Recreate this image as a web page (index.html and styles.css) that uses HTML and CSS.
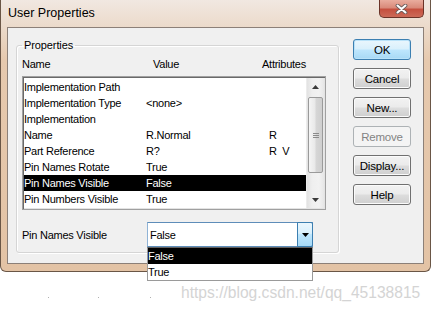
FILE: index.html
```html
<!DOCTYPE html>
<html>
<head>
  <title>User Properties</title>
  <link rel="stylesheet" href="styles.css">
</head>
<body>
  <div class="window">
    <div class="titlebar">
      <span class="title">User Properties</span>
      <div class="close-btn">
        <svg width="13" height="10" viewBox="0 0 13 10">
          <path d="M2.5 1.5 L10.5 8.5 M10.5 1.5 L2.5 8.5" stroke="#6a5a58" stroke-width="3.8" stroke-linecap="round"/>
          <path d="M2.5 1.5 L10.5 8.5 M10.5 1.5 L2.5 8.5" stroke="#ffffff" stroke-width="2.1" stroke-linecap="round"/>
        </svg>
      </div>
    </div>

    <div class="client">
      <fieldset class="group">
        <legend>Properties</legend>

        <div class="col-head">
          <span class="col-name">Name</span>
          <span class="col-value">Value</span>
          <span>Attributes</span>
        </div>

        <div class="listbox">
          <div class="rows">
            <div class="row"><span class="c-name">Implementation Path</span><span class="c-value"></span><span></span></div>
            <div class="row"><span class="c-name">Implementation Type</span><span class="c-value">&lt;none&gt;</span><span></span></div>
            <div class="row"><span class="c-name">Implementation</span><span class="c-value"></span><span></span></div>
            <div class="row"><span class="c-name">Name</span><span class="c-value">R.Normal</span><span>R</span></div>
            <div class="row"><span class="c-name">Part Reference</span><span class="c-value">R?</span><span>R&nbsp;&nbsp;V</span></div>
            <div class="row"><span class="c-name">Pin Names Rotate</span><span class="c-value">True</span><span></span></div>
            <div class="row selected"><span class="c-name">Pin Names Visible</span><span class="c-value">False</span><span></span></div>
            <div class="row"><span class="c-name">Pin Numbers Visible</span><span class="c-value">True</span><span></span></div>
          </div>
          <div class="scrollbar">
            <div class="sb-arrow">
              <svg width="7" height="4" viewBox="0 0 7 4"><path d="M0 4 L3.5 0 L7 4 Z" fill="#3a3a3a"/></svg>
            </div>
            <div class="sb-track">
              <div class="sb-thumb"><span class="grip"></span></div>
            </div>
            <div class="sb-arrow">
              <svg width="7" height="4" viewBox="0 0 7 4"><path d="M0 0 L7 0 L3.5 4 Z" fill="#3a3a3a"/></svg>
            </div>
          </div>
        </div>

        <div class="field">
          <span class="field-label">Pin Names Visible</span>
          <div class="combo">
            <span class="combo-value">False</span>
            <span class="combo-btn">
              <svg width="7" height="4" viewBox="0 0 7 4"><path d="M0 0 L7 0 L3.5 4 Z" fill="#000"/></svg>
            </span>
            <div class="dropdown">
              <div class="option selected">False</div>
              <div class="option">True</div>
            </div>
          </div>
        </div>
      </fieldset>

      <div class="buttons">
        <button class="btn default">OK</button>
        <button class="btn">Cancel</button>
        <button class="btn">New...</button>
        <button class="btn" disabled>Remove</button>
        <button class="btn">Display...</button>
        <button class="btn">Help</button>
      </div>
    </div>
  </div>

  <div class="watermark">
    <span class="dot"></span>
    <span class="dot"></span>
    <span class="dot"></span>
    <span class="wm-text">https://blog.csdn.net/qq_45138815</span>
  </div>
</body>
</html>
```

FILE: styles.css
```css
body {
  margin: 0;
  padding: 0;
  background-color: #ffffff;
  font-family: "Liberation Sans", Arial, sans-serif;
  font-size: 11px;
  color: #000;
}

.window {
  width: 431px;
  height: 272px;
  box-sizing: border-box;
  border: 1px solid #6a5646;
  border-top: none;
  border-radius: 0 0 6px 6px;
  background: linear-gradient(to bottom, #f1e8e1 0px, #ecdccd 24px, #e6c9ae 60px, #e3c3a5 100%);
  display: flex;
  flex-direction: column;
}

.titlebar {
  height: 27px;
  display: flex;
  justify-content: space-between;
  align-items: flex-start;
}

.title {
  font-size: 12.5px;
  padding: 6px 0 0 7px;
  color: #000;
}

.close-btn {
  width: 45px;
  height: 18px;
  margin-right: 6px;
  box-sizing: border-box;
  border: 1px solid #6b3328;
  border-top: none;
  border-radius: 0 0 5px 5px;
  background: linear-gradient(to bottom, #e9ad9e 0%, #d98a7a 45%, #c5503f 55%, #cc6a58 100%);
  display: flex;
  align-items: center;
  justify-content: center;
}

.client {
  width: 417px;
  height: 237px;
  margin: 0 6px 7px 6px;
  box-sizing: border-box;
  border: 1px solid #8c8078;
  background-color: #f0f0f0;
  display: flex;
  align-items: flex-start;
  padding: 11px 0 0 8px;
}

.group {
  margin: 0;
  width: 323px;
  height: 214px;
  box-sizing: border-box;
  border: 1px solid #d5d5d5;
  border-radius: 3px;
  padding: 0 11px 4px 5px;
  box-shadow: inset 1px 1px 0 #ffffff, 1px 1px 0 #ffffff;
}

.group legend {
  padding: 0 2px;
  line-height: 13px;
  font-size: 11px;
  letter-spacing: -0.1px;
}

.col-head {
  display: flex;
  margin-top: 5px;
  line-height: 14px;
  letter-spacing: -0.25px;
}

.col-name {
  width: 131px;
}

.col-value {
  width: 109px;
}

.listbox {
  margin-top: 5px;
  width: 304px;
  height: 134px;
  box-sizing: border-box;
  border: 1px solid #a0a0a0;
  box-shadow: inset 1px 1px 0 #696969, inset -1px -1px 0 #e3e3e3;
  background-color: #ffffff;
  padding: 1px 1px 1px 1px;
  display: flex;
}

.rows {
  flex: 1;
  padding-top: 1px;
}

.row {
  display: flex;
  height: 16px;
  line-height: 16px;
  letter-spacing: -0.25px;
  white-space: nowrap;
}

.row.selected {
  background-color: #000;
  color: #fff;
}

.c-name {
  width: 122px;
}

.c-value {
  width: 123px;
}

.scrollbar {
  width: 17px;
  display: flex;
  flex-direction: column;
  background: linear-gradient(to right, #e2e2e2, #efefef 30%, #f2f2f2 70%, #e6e6e6);
  border-left: 1px solid #ececec;
}

.sb-arrow {
  height: 17px;
  display: flex;
  align-items: center;
  justify-content: center;
}

.sb-track {
  flex: 1;
  padding: 2px 1px 18px 1px;
  display: flex;
}

.sb-thumb {
  flex: 1;
  border: 1px solid #9a9a9a;
  border-radius: 2px;
  background: linear-gradient(to right, #f5f5f5, #e9e9e9 45%, #d6d6d6 55%, #cfcfcf);
  display: flex;
  align-items: center;
  justify-content: center;
}

.grip {
  width: 6px;
  height: 5px;
  background: repeating-linear-gradient(to bottom, #8a8a8a 0px, #8a8a8a 1px, transparent 1px, transparent 2px);
}

.field {
  display: flex;
  align-items: center;
  margin-top: 12px;
}

.field-label {
  width: 125px;
  letter-spacing: -0.25px;
}

.combo {
  position: relative;
  width: 166px;
  height: 25px;
  box-sizing: border-box;
  border: 1px solid #5e8db9;
  border-left-color: #8fb3d6;
  background-color: #ffffff;
  display: flex;
  align-items: center;
}

.combo-value {
  flex: 1;
  padding-left: 2px;
  letter-spacing: -0.25px;
}

.combo-btn {
  width: 16px;
  height: 25px;
  margin: -1px -1px -1px 0;
  box-sizing: border-box;
  border: 1px solid #3c7fb1;
  border-radius: 0 2px 2px 0;
  background: linear-gradient(to bottom, #eaf6fd 0%, #d9f0fc 45%, #bee6fd 50%, #a7d9f5 100%);
  display: flex;
  align-items: center;
  justify-content: center;
}

.dropdown {
  position: absolute;
  top: 24px;
  left: -1px;
  width: 166px;
  box-sizing: border-box;
  border: 1px solid #9a9a9a;
  border-top-color: #646464;
  background-color: #ffffff;
}

.option {
  height: 16px;
  line-height: 16px;
  letter-spacing: -0.25px;
}

.option.selected {
  background-color: #000;
  color: #fff;
}

.buttons {
  display: flex;
  flex-direction: column;
  gap: 8px;
  margin-left: 14px;
}

.btn {
  width: 58px;
  height: 21px;
  padding: 0;
  box-sizing: border-box;
  border: 1px solid #707070;
  border-radius: 3px;
  background: linear-gradient(to bottom, #f2f2f2 0%, #ebebeb 48%, #dddddd 52%, #cfcfcf 100%);
  box-shadow: inset 0 0 0 1px #fbfbfb;
  font-family: "Liberation Sans", Arial, sans-serif;
  font-size: 11.5px;
  color: #000;
  letter-spacing: -0.2px;
}

.btn.default {
  border-color: #3c7fb1;
  background: linear-gradient(to bottom, #eaf6fd 0%, #d9f0fc 48%, #bee6fd 52%, #a7d9f5 100%);
  box-shadow: inset 0 0 0 1px #b9e2f9;
}

.btn:disabled {
  border-color: #adb2b5;
  background: #f4f4f4;
  box-shadow: none;
  color: #838383;
}

.watermark {
  display: flex;
  align-items: center;
  margin-top: 11px;
  height: 20px;
}

.dot {
  width: 1px;
  height: 1px;
  background-color: #b0b0b0;
  margin-top: 8px;
}

.dot:nth-child(1) {
  margin-left: 48px;
}

.dot:nth-child(2) {
  margin-left: 49px;
}

.dot:nth-child(3) {
  margin-left: 51px;
}

.wm-text {
  margin-left: 30px;
  font-size: 15.6px;
  color: #d4d4d4;
}
```
